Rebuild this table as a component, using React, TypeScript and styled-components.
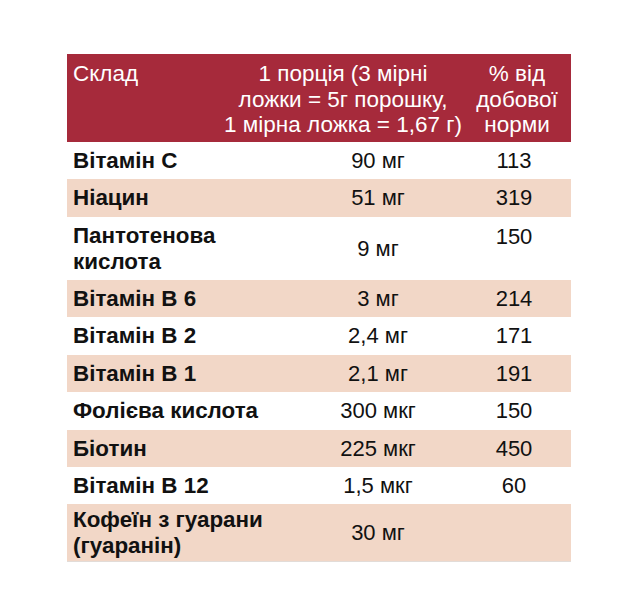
import React from "react";
import styled, { createGlobalStyle } from "styled-components";

const Global = createGlobalStyle`
  html, body {
    margin: 0;
    padding: 0;
    background: #ffffff;
  }
  body {
    font-family: "Liberation Sans", Arial, sans-serif;
    color: #111111;
  }
`;

const Page = styled.div`
  padding: 54px 0 0 67px;
  width: 639px;
  height: 600px;
  box-sizing: border-box;
`;

const Table = styled.div`
  width: 504px;
  display: flex;
  flex-direction: column;
  border-bottom: 1px solid #e2dcd8;
`;

const HeaderRow = styled.div`
  display: grid;
  grid-template-columns: 153px 246px 105px;
  height: 88px;
  background: #a62a3b;
  color: #ffffff;
  font-size: 22.5px;
  line-height: 25.5px;
  font-weight: 400;
  box-sizing: border-box;
  padding-top: 7px;
`;

const HeadCell = styled.div<{ $align: "left" | "center"; $padL?: number; $padR?: number }>`
  text-align: ${(p) => p.$align};
  padding-left: ${(p) => p.$padL ?? 0}px;
  padding-right: ${(p) => p.$padR ?? 0}px;
  white-space: nowrap;
`;

const Row = styled.div<{ $alt: boolean; $h: number; $lh: number }>`
  display: grid;
  grid-template-columns: 223px 176px 105px;
  height: ${(p) => p.$h}px;
  background: ${(p) => (p.$alt ? "#f2d7c7" : "#ffffff")};
  font-size: 22px;
  line-height: ${(p) => p.$lh}px;
  align-items: center;
`;

const NameCell = styled.div`
  padding-left: 6px;
  font-weight: 700;
  font-size: 22.4px;
  white-space: nowrap;
`;

const ValueCell = styled.div<{ $top?: boolean; $padR?: number }>`
  text-align: center;
  font-weight: 400;
  padding-right: ${(p) => p.$padR ?? 0}px;
  align-self: ${(p) => (p.$top ? "start" : "center")};
  padding-top: ${(p) => (p.$top ? "7px" : "0")};
  white-space: nowrap;
`;

type Item = {
  name: string[];
  amount: string;
  pct: string;
  h: number;
  lh?: number;
  pctTop?: boolean;
};

const items: Item[] = [
  { name: ["Вітамін С"], amount: "90 мг", pct: "113", h: 37 },
  { name: ["Ніацин"], amount: "51 мг", pct: "319", h: 38 },
  { name: ["Пантотенова", "кислота"], amount: "9 мг", pct: "150", h: 63, lh: 25.2, pctTop: true },
  { name: ["Вітамін В 6"], amount: "3 мг", pct: "214", h: 37 },
  { name: ["Вітамін В 2"], amount: "2,4 мг", pct: "171", h: 38 },
  { name: ["Вітамін В 1"], amount: "2,1 мг", pct: "191", h: 37 },
  { name: ["Фолієва кислота"], amount: "300 мкг", pct: "150", h: 38 },
  { name: ["Біотин"], amount: "225 мкг", pct: "450", h: 37 },
  { name: ["Вітамін В 12"], amount: "1,5 мкг", pct: "60", h: 37 },
  { name: ["Кофеїн з гуарани", "(гуаранін)"], amount: "30 мг", pct: "", h: 57, lh: 25.1 },
];

export default function App() {
  return (
    <>
      <Global />
      <Page>
        <Table>
          <HeaderRow>
            <HeadCell $align="left" $padL={6}>Склад</HeadCell>
            <HeadCell $align="center">
              1 порція (3 мірні
              <br />
              ложки = 5г порошку,
              <br />
              1 мірна ложка = 1,67 г)
            </HeadCell>
            <HeadCell $align="center" $padR={3}>
              % від
              <br />
              добової
              <br />
              норми
            </HeadCell>
          </HeaderRow>
          {items.map((it, i) => (
            <Row key={i} $alt={i % 2 === 1} $h={it.h} $lh={it.lh ?? 25.2}>
              <NameCell>
                {it.name.map((n, j) => (
                  <React.Fragment key={j}>
                    {j > 0 && <br />}
                    {n}
                  </React.Fragment>
                ))}
              </NameCell>
              <ValueCell>{it.amount}</ValueCell>
              <ValueCell $top={it.pctTop} $padR={9}>
                {it.pct}
              </ValueCell>
            </Row>
          ))}
        </Table>
      </Page>
    </>
  );
}
